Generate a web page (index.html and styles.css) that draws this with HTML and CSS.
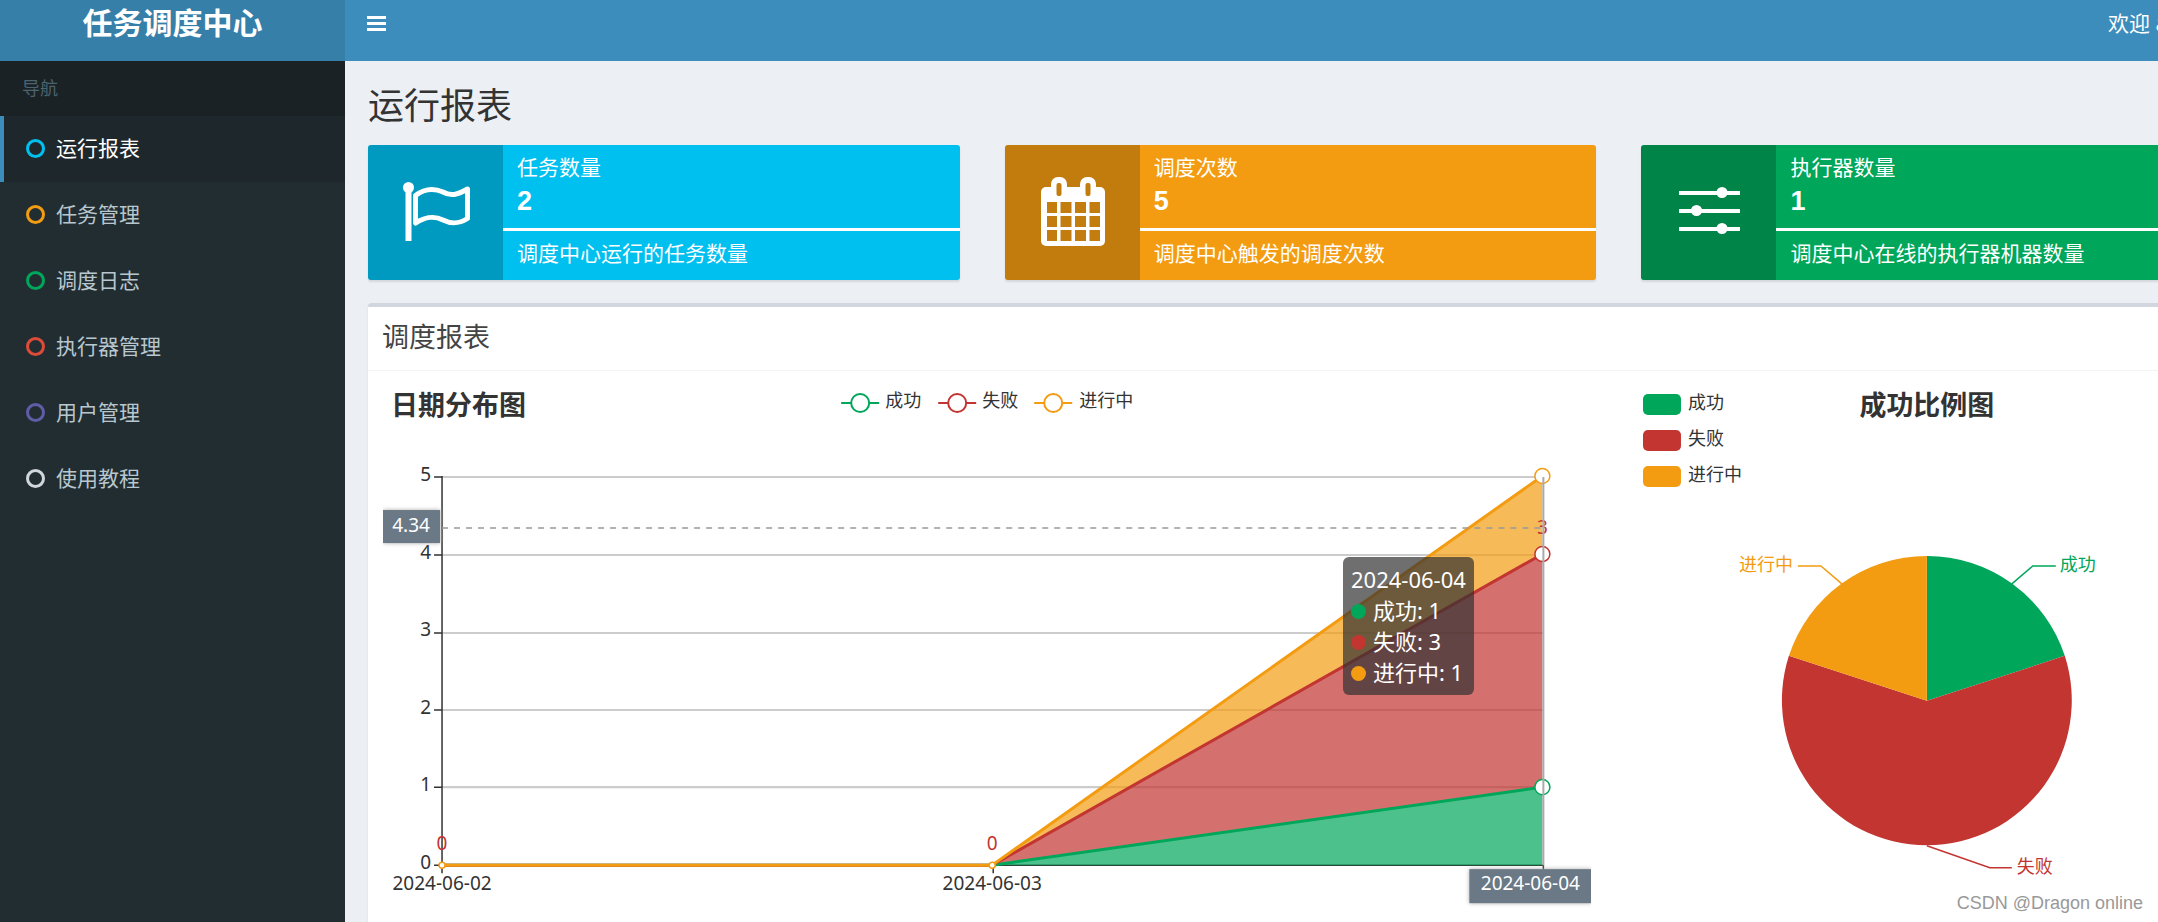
FILE: index.html
```html
<!DOCTYPE html>
<html lang="zh-CN">
<head>
<meta charset="utf-8">
<title>任务调度中心</title>
<link rel="stylesheet" href="styles.css">
</head>
<body>
<div class="wrapper">
  <aside class="sidebar">
    <a class="logo" href="#">任务调度中心</a>
    <nav class="menu">
      <div class="menu-header">导航</div>
      <a class="menu-item active" href="#"><span class="ring aqua"></span>运行报表</a>
      <a class="menu-item" href="#"><span class="ring yellow"></span>任务管理</a>
      <a class="menu-item" href="#"><span class="ring green"></span>调度日志</a>
      <a class="menu-item" href="#"><span class="ring red"></span>执行器管理</a>
      <a class="menu-item" href="#"><span class="ring purple"></span>用户管理</a>
      <a class="menu-item" href="#"><span class="ring gray"></span>使用教程</a>
    </nav>
  </aside>
  <div class="page">
    <header class="navbar">
      <button class="toggle" type="button" aria-label="菜单"><span></span><span></span><span></span></button>
      <a class="user" href="#">欢迎 admin</a>
    </header>
    <main class="content">
      <h1 class="page-title">运行报表</h1>
      <section class="cards">
        <article class="card card-aqua">
          <div class="card-icon">
            <svg viewBox="0 0 135 135" fill="none" stroke="#fff" stroke-width="5" stroke-linejoin="round" stroke-linecap="round">
              <circle cx="40.500" cy="42.500" r="5.500" fill="#fff" stroke="none"/>
              <path d="M40.500 44V96" stroke-width="6" stroke-linecap="butt"/>
              <path d="M47.500 50.500C56 44 66 43 75 47C83 51.500 89 50 99.500 44V73.500C90 79.500 83 79 75 75C66 70.500 58 71.500 47.500 78Z"/>
            </svg>
          </div>
          <div class="card-body">
            <div class="card-main"><span class="card-label">任务数量</span><strong class="card-number">2</strong></div>
            <div class="card-note">调度中心运行的任务数量</div>
          </div>
        </article>
        <article class="card card-yellow">
          <div class="card-icon">
            <svg viewBox="0 0 135 135">
              <g fill="#fff">
                <rect x="36" y="42" width="64" height="59" rx="5"/>
                <rect x="46" y="32" width="16" height="22" rx="7"/>
                <rect x="75" y="32" width="16" height="22" rx="7"/>
              </g>
              <g fill="#c27d0e">
                <rect x="51.500" y="38" width="5" height="13" rx="2"/>
                <rect x="80.500" y="38" width="5" height="13" rx="2"/>
                <path d="M42 57h10v11h-10zM55.500 57h11v11h-11zM70 57h11v11h-11zM84.500 57h10.500v11h-10.500zM42 71h10v11h-10zM55.500 71h11v11h-11zM70 71h11v11h-11zM84.500 71h10.500v11h-10.500zM42 85h10v11h-10zM55.500 85h11v11h-11zM70 85h11v11h-11zM84.500 85h10.500v11h-10.500z"/>
              </g>
            </svg>
          </div>
          <div class="card-body">
            <div class="card-main"><span class="card-label">调度次数</span><strong class="card-number">5</strong></div>
            <div class="card-note">调度中心触发的调度次数</div>
          </div>
        </article>
        <article class="card card-green">
          <div class="card-icon">
            <svg viewBox="0 0 135 135" fill="#fff">
              <path d="M38 46h61v4h-61zM38 64h61v4h-61zM38 82h61v4h-61z"/>
              <circle cx="81" cy="47.500" r="5.500"/><circle cx="55.500" cy="65.500" r="5.500"/><circle cx="81" cy="83.500" r="5.500"/>
            </svg>
          </div>
          <div class="card-body">
            <div class="card-main"><span class="card-label">执行器数量</span><strong class="card-number">1</strong></div>
            <div class="card-note">调度中心在线的执行器机器数量</div>
          </div>
        </article>
      </section>
      <section class="panel">
        <h2 class="panel-title">调度报表</h2>
        <div class="panel-body">
          <div class="line-chart">
            <svg viewBox="0 0 1208 600" role="img" aria-label="日期分布图">
              <text class="chart-title" x="8" y="29">日期分布图</text>
              <g class="legend" fill="#fff" stroke-width="2">
                <g stroke="#00a65a"><path d="M458 17h38"/><circle cx="477" cy="17" r="9"/></g>
                <g stroke="#c23531"><path d="M555 17h38"/><circle cx="574" cy="17" r="9"/></g>
                <g stroke="#f39c12"><path d="M651 17h38"/><circle cx="670" cy="17" r="9"/></g>
              </g>
              <g class="label"><text x="502" y="21">成功</text><text x="599" y="21">失败</text><text x="696" y="21">进行中</text></g>
              <path d="M59 91H1160M59 169H1160M59 247H1160M59 324H1160M59 401H1160" stroke="#ccc" stroke-width="2"/>
              <path d="M59 90V487M51 91h8M51 169h8M51 247h8M51 324h8M51 401h8M51 479H1160M610 479v8M1160 479v8" stroke="#333" stroke-width="1.500" fill="none"/>
              <g class="label number end"><text x="48" y="95">5</text><text x="48" y="173">4</text><text x="48" y="250">3</text><text x="48" y="328">2</text><text x="48" y="405">1</text><text x="48" y="483">0</text></g>
              <g class="label number mid"><text x="59" y="504">2024-06-02</text><text x="609" y="504">2024-06-03</text></g>
              <g fill-opacity=".7">
                <path d="M609 479L1159 401V479Z" fill="#00a65a"/>
                <path d="M609 479L1159 168V401Z" fill="#c23531"/>
                <path d="M609 479L1159 90V168Z" fill="#f39c12"/>
              </g>
              <g fill="none" stroke-width="3" stroke-linejoin="bevel">
                <path d="M59 479H609L1159 401" stroke="#00a65a"/>
                <path d="M59 479H609L1159 168" stroke="#c23531"/>
                <path d="M59 479H609L1159 90" stroke="#f39c12"/>
              </g>
              <g fill="#fff" stroke-width="1.500">
                <circle cx="59" cy="479" r="3" stroke="#f39c12"/><circle cx="609" cy="479" r="3" stroke="#f39c12"/>
                <circle cx="1159" cy="401" r="7.500" stroke="#00a65a"/><circle cx="1159" cy="168" r="7.500" stroke="#c23531"/><circle cx="1159" cy="90" r="7.500" stroke="#f39c12"/>
              </g>
              <g class="label number mid value"><text x="59" y="464">0</text><text x="609" y="464">0</text><text x="1159" y="148">3</text></g>
              <path d="M59 142H1160" stroke="#999" stroke-width="1.500" stroke-dasharray="6 6"/>
              <path d="M1160 91V479" stroke="#aaa" stroke-width="2"/>
              <g class="pointer"><rect x="0" y="124" width="57" height="33"/><rect x="1086" y="483" width="122" height="34"/></g>
              <g class="label number mid inverse"><text x="28" y="146">4.34</text><text x="1147" y="504">2024-06-04</text></g>
            </svg>
            <div class="tooltip">
              <div>2024-06-04</div>
              <div><i class="dot dot-green"></i>成功: 1</div>
              <div><i class="dot dot-red"></i>失败: 3</div>
              <div><i class="dot dot-yellow"></i>进行中: 1</div>
            </div>
          </div>
          <div class="pie-chart">
            <svg viewBox="0 0 582 600" role="img" aria-label="成功比例图">
              <rect x="7" y="8" width="38" height="21" rx="5" fill="#00a65a"/>
              <rect x="7" y="44" width="38" height="21" rx="5" fill="#c23531"/>
              <rect x="7" y="80" width="38" height="21" rx="5" fill="#f39c12"/>
              <g class="label"><text x="52" y="23">成功</text><text x="52" y="59">失败</text><text x="52" y="95">进行中</text></g>
              <text class="chart-title mid" x="291" y="29">成功比例图</text>
              <path d="M291 315V170A145 145 0 0 1 429 270Z" fill="#00a65a"/>
              <path d="M291 315L429 270A145 145 0 1 1 153 270Z" fill="#c23531"/>
              <path d="M291 315L153 270A145 145 0 0 1 291 170Z" fill="#f39c12"/>
              <g fill="none" stroke-width="1.500">
                <path d="M376 198L397 180H420" stroke="#00a65a"/>
                <path d="M206 198L185 180H162" stroke="#f39c12"/>
                <path d="M291 460L354 482H376" stroke="#c23531"/>
              </g>
              <g class="label"><text class="t-green" x="424" y="185">成功</text><text class="t-yellow end" x="157" y="185">进行中</text><text class="t-red" x="381" y="487">失败</text></g>
            </svg>
          </div>
        </div>
      </section>
    </main>
  </div>
</div>
<div class="watermark">CSDN @Dragon online</div>
</body>
</html>
```
FILE: styles.css
```css
* { box-sizing: border-box; }

body {
  margin: 0;
  height: 100vh;
  overflow: hidden;
  position: relative;
  background: #ecf0f5;
  color: #333;
  font: 21px/30px "Noto Sans", "Noto Sans CJK SC", sans-serif;
}

a { color: inherit; text-decoration: none; }

/* The layout is a little wider than the window and is cut at its right edge. */
.wrapper {
  display: grid;
  grid-template-columns: 345px minmax(0, 1fr);
  width: 104.5%;
  height: 100%;
}

.sidebar { background: #222d32; }

.logo {
  display: flex;
  align-items: center;
  justify-content: center;
  height: 61px;
  padding-bottom: 16px;
  background: #367fa9;
  color: #fff;
  font-size: 30px;
  font-weight: 700;
}

.menu-header {
  display: flex;
  align-items: center;
  height: 55px;
  padding: 0 22px 2px;
  background: #1a2226;
  color: #4b646f;
  font-size: 18px;
}

.menu-item {
  display: flex;
  align-items: center;
  gap: 11px;
  height: 66px;
  padding: 0 22px 2px;
  border-left: 4px solid transparent;
  color: #b8c7ce;
}

.menu-item.active {
  background: #1e282c;
  border-left-color: #3c8dbc;
  color: #fff;
}

.ring {
  width: 19px;
  height: 19px;
  border: 3px solid;
  border-radius: 50%;
}

.aqua { color: #00c0ef; }
.yellow { color: #f39c12; }
.green { color: #00a65a; }
.red { color: #dd4b39; }
.purple { color: #605ca8; }
.gray { color: #d2d6de; }

.navbar {
  display: flex;
  align-items: center;
  justify-content: space-between;
  height: 61px;
  padding: 0 37px 15px 22px;
  background: #3c8dbc;
  color: #fff;
}

.toggle {
  display: grid;
  gap: 3px;
  width: 19px;
  padding: 0;
  border: 0;
  background: none;
}

.toggle span { height: 3px; background: #fff; }

.content { padding: 24px 22px 0 23px; }

.page-title {
  margin: 0 0 18px;
  font-size: 36px;
  line-height: 42px;
  font-weight: 400;
}

.cards {
  display: grid;
  grid-template-columns: repeat(3, minmax(0, 1fr));
  gap: 45px;
  margin-bottom: 23px;
}

.card {
  display: flex;
  height: 135px;
  overflow: hidden;
  border-radius: 3px;
  box-shadow: 0 2px 2px rgba(0, 0, 0, .1);
  color: #fff;
}

.card-aqua { background: #00c0ef; }
.card-yellow { background: #f39c12; }
.card-green { background: #00a65a; }

.card-icon { width: 135px; background: rgba(0, 0, 0, .2); }
.card-icon svg { display: block; }

.card-body { flex: 1; }

.card-main {
  display: grid;
  align-content: start;
  height: 86px;
  padding: 7px 14px 0;
  border-bottom: 3px solid #fff;
}

.card-number {
  font: 700 27px/38px "Liberation Sans", sans-serif;
}

.card-note { padding: 7px 14px; }

.panel {
  border-top: 4px solid #d2d6de;
  border-radius: 4px;
  background: #fff;
  box-shadow: 0 1px 2px rgba(0, 0, 0, .1);
}

.panel-title {
  margin: 0;
  padding: 15px 14px 18px;
  border-bottom: 1px solid #f4f4f4;
  color: #444;
  font-size: 27px;
  line-height: 30px;
  font-weight: 400;
}

.panel-body {
  display: grid;
  grid-template-columns: repeat(12, minmax(0, 1fr));
  gap: 45px;
  padding: 15px;
}

.line-chart { grid-column: span 8; position: relative; }
.pie-chart { grid-column: span 4; }
.line-chart svg, .pie-chart svg { display: block; width: 100%; }

.chart-title { font-size: 27px; font-weight: 700; fill: #333; }
.label { font-size: 18px; fill: #333; }
.number { font-size: 19px; }
.mid { text-anchor: middle; }
.end { text-anchor: end; }
.value, .t-red { fill: #c23531; }
.t-green { fill: #00a65a; }
.t-yellow { fill: #f39c12; }
.inverse { fill: #fff; }
.pointer { fill: #6a7985; filter: drop-shadow(0 0 2px #aaa); }

.tooltip {
  position: absolute;
  left: 960px;
  top: 171px;
  padding: 7px 8px;
  border-radius: 6px;
  background: rgba(50, 50, 50, .7);
  color: #fff;
  font-size: 22px;
  line-height: 31px;
  white-space: nowrap;
}

.dot {
  display: inline-block;
  width: 15px;
  height: 15px;
  margin-right: 7px;
  border-radius: 50%;
}

.dot-green { background: #00a65a; }
.dot-red { background: #c23531; }
.dot-yellow { background: #f39c12; }

.watermark {
  position: absolute;
  right: 15px;
  bottom: 4px;
  color: #999;
  font: 18px/30px "Liberation Sans", sans-serif;
}
```
